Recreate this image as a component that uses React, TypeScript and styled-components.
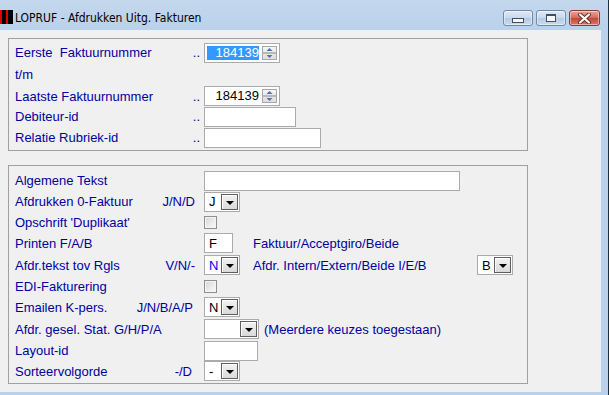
import styled, { createGlobalStyle } from "styled-components";

const GlobalStyle = createGlobalStyle`
  html, body { margin: 0; padding: 0; }
  body {
    width: 609px;
    height: 395px;
    overflow: hidden;
    font-family: "Liberation Sans", Arial, sans-serif;
  }
`;

const Window = styled.div`
  width: 609px;
  height: 395px;
  box-sizing: border-box;
  display: flex;
  flex-direction: column;
  background: #b9d1ea;
  border-right: 1px solid #1c2f3f;
  padding-bottom: 3px;
`;

const TitleBar = styled.div`
  height: 30px;
  flex: none;
  box-sizing: border-box;
  display: flex;
  align-items: flex-start;
  padding: 10px 8px 0 0;
  background: linear-gradient(#c4d8ed, #b9d1ea);
`;

const AppIcon = styled.div`
  width: 13px;
  height: 14px;
  flex: none;
  background: linear-gradient(
    to right,
    #e00000 0 2px,
    #000 2px 6px,
    #e00000 6px 8px,
    #000 8px
  );
`;

const Title = styled.div`
  margin-left: 2px;
  font-family: "Liberation Sans Narrow", "DejaVu Sans Condensed", sans-serif;
  font-size: 12px;
  line-height: 16px;
  color: #000;
`;

const Caption = styled.div`
  margin-left: auto;
  display: flex;
  gap: 3px;
`;

const CaptionButton = styled.div<{ $close?: boolean }>`
  width: ${(p) => (p.$close ? 31 : 30)}px;
  height: 16px;
  box-sizing: border-box;
  border: 1px solid ${(p) => (p.$close ? "#8a3a36" : "#6f8aa8")};
  border-radius: 3px;
  display: flex;
  align-items: center;
  justify-content: center;
  background: ${(p) =>
    p.$close
      ? "linear-gradient(#e8a59c, #d26a5e 50%, #c1463a 51%, #d8786a)"
      : "linear-gradient(#dfe9f5, #c8d9ec 50%, #b4c9e2 51%, #c9dbee)"};
  box-shadow: inset 0 0 0 1px rgba(255, 255, 255, 0.45);
`;

const MinGlyph = styled.div`
  width: 10px;
  height: 3px;
  margin-top: 4px;
  border: 1px solid #3b4f66;
  background: #f4f6f8;
`;

const MaxGlyph = styled.div`
  width: 8px;
  height: 5px;
  border: 1px solid #3b4f66;
  border-top-width: 2px;
  background: #f4f6f8;
`;

const Body = styled.div`
  flex: 1;
  display: flex;
  min-height: 0;
`;

const Client = styled.div`
  width: 601px;
  flex: none;
  box-sizing: border-box;
  background: #f0f0f0;
  padding: 8px 0 0 8px;
  display: flex;
  flex-direction: column;
  gap: 14px;
`;

const Group = styled.div<{ $pt: number; $pb: number }>`
  width: 520px;
  box-sizing: border-box;
  border: 1px solid #a0a0a0;
  padding: ${(p) => p.$pt}px 0 ${(p) => p.$pb}px 6px;
`;

const Row = styled.div<{ $h: number }>`
  height: ${(p) => p.$h}px;
  display: flex;
  align-items: center;
  font-size: 13px;
  color: #0000a0;
  white-space: pre;
`;

const LabelCell = styled.div`
  width: 189px;
  flex: none;
  display: flex;
  justify-content: space-between;
  align-items: center;
`;

const Hint = styled.span<{ $mr: number }>`
  margin-right: ${(p) => p.$mr}px;
`;

const Note = styled.span<{ $ml: number; $w?: number }>`
  margin-left: ${(p) => p.$ml}px;
  ${(p) => (p.$w ? `width: ${p.$w}px; flex: none;` : "")}
`;

const TextBox = styled.div<{ $w: number }>`
  width: ${(p) => p.$w}px;
  height: 20px;
  flex: none;
  box-sizing: border-box;
  border: 1px solid #ababab;
  background: #fff;
  padding: 0 4px;
  display: flex;
  align-items: center;
  color: #000;
`;

const SpinBox = styled.div`
  width: 76px;
  height: 20px;
  flex: none;
  box-sizing: border-box;
  border: 1px solid #ababab;
  background: #fff;
  padding: 0 2px;
  display: flex;
  align-items: center;
  gap: 3px;
`;

const SpinText = styled.div<{ $selected?: boolean }>`
  width: 52px;
  height: 14px;
  line-height: 14px;
  text-align: right;
  background: ${(p) => (p.$selected ? "#3399ff" : "transparent")};
  color: ${(p) => (p.$selected ? "#fff" : "#000")};
`;

const SpinButtons = styled.svg`
  width: 15px;
  height: 14px;
  flex: none;
`;

const Combo = styled.div<{ $w: number; $color?: string }>`
  width: ${(p) => p.$w}px;
  height: 20px;
  flex: none;
  box-sizing: border-box;
  border: 1px solid #ababab;
  background: #fff;
  display: flex;
  align-items: center;
  color: ${(p) => p.$color || "#000"};
`;

const ComboText = styled.span`
  flex: 1;
  padding-left: 4px;
`;

const ComboButton = styled.div`
  width: 17px;
  height: 16px;
  margin-right: 1px;
  box-sizing: border-box;
  border: 1px solid #5f5f5f;
  background: linear-gradient(#f2f2f2, #d9d9d9);
  box-shadow: inset 1px 1px 0 #fff;
  display: flex;
  align-items: center;
  justify-content: center;
`;

const Arrow = styled.div`
  width: 0;
  height: 0;
  margin-top: 2px;
  border-left: 4px solid transparent;
  border-right: 4px solid transparent;
  border-top: 4px solid #000;
`;

const CheckBox = styled.div`
  width: 13px;
  height: 13px;
  flex: none;
  box-sizing: border-box;
  border: 1px solid #8e8f8f;
  background: linear-gradient(135deg, #d6d6d6, #fbfbfb);
  box-shadow: inset 0 0 0 1px #f4f4f4;
`;

function Spinner({ value, selected }: { value: string; selected?: boolean }) {
  return (
    <SpinBox>
      <SpinText $selected={selected}>{value}</SpinText>
      <SpinButtons viewBox="0 0 15 14">
        <defs>
          <linearGradient id="spg" x1="0" y1="0" x2="0" y2="1">
            <stop offset="0" stopColor="#f6f6f6" />
            <stop offset="1" stopColor="#dcdcdc" />
          </linearGradient>
        </defs>
        <rect x="0.5" y="0.5" width="14" height="13" fill="url(#spg)" stroke="#a8a8a8" />
        <rect x="1" y="6" width="13" height="2" fill="#b8b8b8" />
        <path d="M4.5 5 L7.5 2 L10.5 5 Z" fill="#5270b0" />
        <path d="M4.5 9 L7.5 12 L10.5 9 Z" fill="#5270b0" />
      </SpinButtons>
    </SpinBox>
  );
}

function Select({ w, value, color }: { w: number; value?: string; color?: string }) {
  return (
    <Combo $w={w} $color={color}>
      <ComboText>{value}</ComboText>
      <ComboButton>
        <Arrow />
      </ComboButton>
    </Combo>
  );
}

function Label({ name, hint, mr = 9 }: { name: string; hint?: string; mr?: number }) {
  return (
    <LabelCell>
      <span>{name}</span>
      {hint && <Hint $mr={mr}>{hint}</Hint>}
    </LabelCell>
  );
}

export default function App() {
  return (
    <>
      <GlobalStyle />
      <Window>
        <TitleBar>
          <AppIcon />
          <Title>LOPRUF - Afdrukken Uitg. Fakturen</Title>
          <Caption>
            <CaptionButton>
              <MinGlyph />
            </CaptionButton>
            <CaptionButton>
              <MaxGlyph />
            </CaptionButton>
            <CaptionButton $close>
              <svg width="13" height="11" viewBox="0 0 13 11">
                <path d="M2 1.5 L11 9.5 M11 1.5 L2 9.5" stroke="#6b2a24" strokeWidth="4" strokeLinecap="round" />
                <path d="M2 1.5 L11 9.5 M11 1.5 L2 9.5" stroke="#fff" strokeWidth="2.2" strokeLinecap="round" />
              </svg>
            </CaptionButton>
          </Caption>
        </TitleBar>
        <Body>
          <Client>
            <Group $pt={3} $pb={2}>
              <Row $h={21}>
                <Label name="Eerste  Faktuurnummer" hint=".." mr={4} />
                <Spinner value="184139" selected />
              </Row>
              <Row $h={23}>
                <Label name="t/m" />
              </Row>
              <Row $h={20}>
                <Label name="Laatste Faktuurnummer" hint=".." mr={4} />
                <Spinner value="184139" />
              </Row>
              <Row $h={21}>
                <Label name="Debiteur-id" hint=".." mr={4} />
                <TextBox $w={92} />
              </Row>
              <Row $h={21}>
                <Label name="Relatie Rubriek-id" hint=".." mr={4} />
                <TextBox $w={117} />
              </Row>
            </Group>
            <Group $pt={4} $pb={2}>
              <Row $h={21}>
                <Label name="Algemene Tekst" />
                <TextBox $w={256} />
              </Row>
              <Row $h={21}>
                <Label name="Afdrukken 0-Faktuur" hint="J/N/D" />
                <Select w={36} value="J" />
              </Row>
              <Row $h={20}>
                <Label name="Opschrift 'Duplikaat'" />
                <CheckBox />
              </Row>
              <Row $h={22}>
                <Label name="Printen F/A/B" />
                <TextBox $w={29}>F</TextBox>
                <Note $ml={20}>Faktuur/Acceptgiro/Beide</Note>
              </Row>
              <Row $h={22}>
                <Label name="Afdr.tekst tov Rgls" hint="V/N/-" />
                <Select w={36} value="N" color="#0000e0" />
                <Note $ml={13} $w={224}>
                  Afdr. Intern/Extern/Beide I/E/B
                </Note>
                <Select w={36} value="B" />
              </Row>
              <Row $h={20}>
                <Label name="EDI-Fakturering" />
                <CheckBox />
              </Row>
              <Row $h={22}>
                <Label name="Emailen K-pers." hint="J/N/B/A/P" mr={11} />
                <Select w={36} value="N" />
              </Row>
              <Row $h={22}>
                <Label name="Afdr. gesel. Stat. G/H/P/A" />
                <Select w={55} />
                <Note $ml={5}>(Meerdere keuzes toegestaan)</Note>
              </Row>
              <Row $h={21}>
                <Label name="Layout-id" />
                <TextBox $w={54} />
              </Row>
              <Row $h={20}>
                <Label name="Sorteervolgorde" hint="-/D" mr={12} />
                <Select w={36} value="-" />
              </Row>
            </Group>
          </Client>
        </Body>
      </Window>
    </>
  );
}
